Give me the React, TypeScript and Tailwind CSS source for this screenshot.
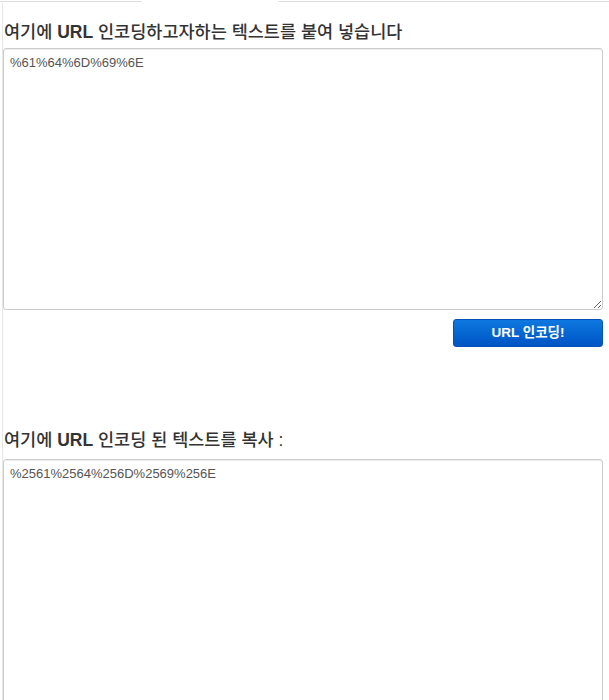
import React from "react";

const font = { fontFamily: '"Liberation Sans", "Noto Sans CJK KR", sans-serif' };

export default function App() {
  return (
    <div className="min-h-[700px] bg-white text-[#333]" style={font}>
      {/* tab strip bottom edges */}
      <div className="flex h-[3px] items-start">
        <div className="mt-px h-px w-[142px] rounded-br bg-[#ddd]" />
        <div className="w-[136px]" />
        <div className="mt-px h-px flex-1 rounded-bl bg-[#ddd]" />
      </div>

      <div className="ml-[2px] border-l border-[#e6e6e6] pr-[6px]">
        <label className="block pt-[18px] pl-[1px] text-[17.5px] font-medium leading-[22px]">
          여기에 <b>URL</b> 인코딩하고자하는 텍스트를 붙여 넣습니다
        </label>
        <textarea
          className="mt-[5px] block h-[262px] w-full rounded-[3px] border border-[#ccc] px-[6px] py-[5px] text-[13px] leading-[18px] text-[#555] shadow-[inset_0_1px_1px_rgba(0,0,0,0.075)] outline-none"
          defaultValue="%61%64%6D%69%6E"
        />
        <div className="mt-[9px] flex justify-end">
          <button className="h-[28px] w-[150px] rounded-[3px] border border-[#0450b4] bg-gradient-to-b from-[#0f78e0] to-[#0054c4] text-[13.5px] font-semibold text-white">
            URL 인코딩!
          </button>
        </div>

        <label className="block pt-[82px] pl-[1px] text-[17.5px] font-medium leading-[22px]">
          여기에 <b>URL</b> 인코딩 된 텍스트를 복사 :
        </label>
        <textarea
          className="mt-[8px] block h-[262px] w-full rounded-[3px] border border-[#ccc] px-[6px] py-[5px] text-[13px] leading-[18px] text-[#555] shadow-[inset_0_1px_1px_rgba(0,0,0,0.075)] outline-none"
          defaultValue="%2561%2564%256D%2569%256E"
        />
      </div>
    </div>
  );
}
